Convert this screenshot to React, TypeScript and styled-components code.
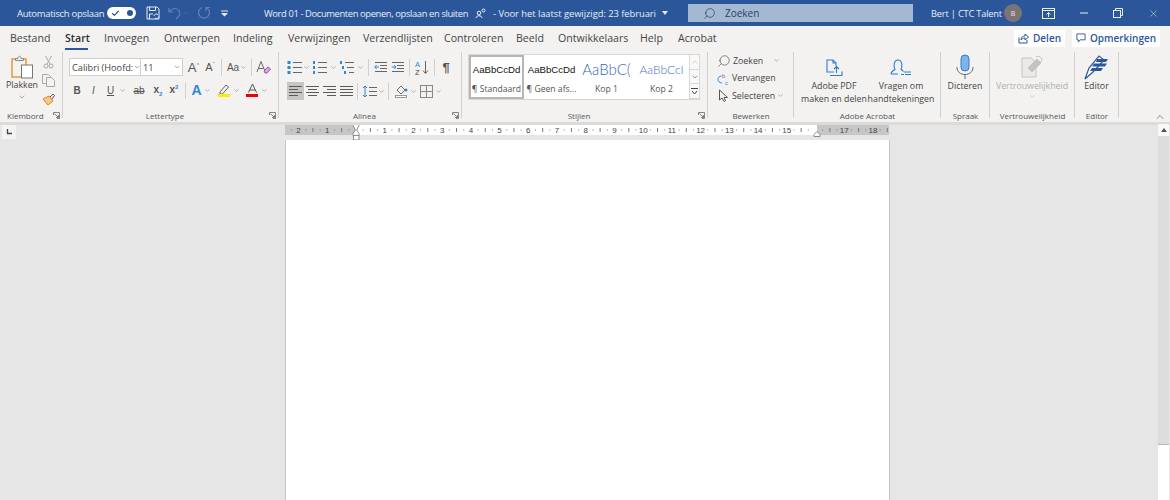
import React from 'react';
import styled, { createGlobalStyle } from 'styled-components';
import { ChevronDown, ChevronUp, Search, X, Check } from 'lucide-react';

const Global = createGlobalStyle`
  html, body { margin: 0; padding: 0; height: 500px; overflow: hidden; }
  body { font-family: "Open Sans", "Liberation Sans", sans-serif; background: #e6e6e6; }
  #root { height: 500px; }
`;

const Page = styled.div`
  width: 1170px;
  height: 500px;
  display: flex;
  flex-direction: column;
  overflow: hidden;
`;

/* title bar */
const TitleBar = styled.div`
  height: 26px;
  background: #2b579a;
  color: #e8edf5;
  display: flex;
  align-items: center;
  font-size: 9.4px;
  flex-shrink: 0;
`;
const AutoSave = styled.span`
  margin-left: 17px;
  width: 90px;
  white-space: nowrap;
  letter-spacing: -0.3px;
  font-size: 9.5px;
`;
const Toggle = styled.div`
  width: 29px;
  height: 12px;
  border-radius: 6px;
  background: #fff;
  display: flex;
  align-items: center;
  justify-content: space-between;
  padding: 0 3px 0 4px;
  box-sizing: border-box;
  color: #2b579a;
`;
const Dot = styled.i`
  width: 6px;
  height: 6px;
  border-radius: 50%;
  background: #2b579a;
`;
const QuickIcons = styled.div`
  display: flex;
  align-items: center;
  margin-left: 10px;
  width: 118px;
`;
const DocTitle = styled.div`
  width: 424px;
  display: flex;
  align-items: center;
  white-space: nowrap;
`;
const DocName = styled.span`
  letter-spacing: -0.38px;
`;
const DocDate = styled.span`
  margin-left: 7px;
  letter-spacing: -0.05px;
`;
const SearchBox = styled.div`
  width: 225px;
  height: 18px;
  background: #a5b8d2;
  color: #26426e;
  display: flex;
  align-items: center;
  padding-left: 15px;
  box-sizing: border-box;
  gap: 9px;
  font-size: 10px;
`;
const UserName = styled.span`
  margin-left: 18px;
  width: 73px;
  white-space: nowrap;
  font-size: 9.2px;
  letter-spacing: -0.15px;
`;
const Avatar = styled.div`
  width: 18px;
  height: 18px;
  border-radius: 50%;
  background: #7a7574;
  color: #e8e8e8;
  font-size: 7px;
  display: flex;
  align-items: center;
  justify-content: center;
`;
const WinButtons = styled.div`
  display: flex;
  align-items: center;
  margin-left: 20px;
  gap: 25px;
`;

/* tabs */
const TabRow = styled.div`
  height: 24px;
  background: #f3f2f1;
  display: flex;
  align-items: center;
  padding-left: 10px;
  font-size: 10.6px;
  color: #444;
  flex-shrink: 0;
`;
const Tab = styled.div<{ $w: number; $active?: boolean }>`
  width: ${(p) => p.$w}px;
  white-space: nowrap;
  position: relative;
  font-weight: ${(p) => (p.$active ? 600 : 400)};
  color: ${(p) => (p.$active ? '#2f2f2f' : '#444')};
  ${(p) =>
    p.$active &&
    `&::after { content: ''; position: absolute; left: 0; bottom: -5px; width: 23px; height: 2px; background: #2b579a; }`}
`;
const TabRight = styled.div`
  margin-left: auto;
  display: flex;
  gap: 7px;
  padding-right: 10px;
`;
const ShareBtn = styled.div<{ $w: number }>`
  width: ${(p) => p.$w}px;
  height: 17px;
  background: #fff;
  color: #2b579a;
  font-size: 10px;
  font-weight: 600;
  display: flex;
  align-items: center;
  justify-content: center;
  gap: 4px;
  white-space: nowrap;
`;

/* ribbon */
const Ribbon = styled.div`
  height: 72px;
  background: #f3f2f1;
  display: flex;
  flex-shrink: 0;
  border-bottom: 3px solid #dcdbda;
  position: relative;
`;
const Group = styled.div<{ $w: number }>`
  width: ${(p) => p.$w}px;
  height: 69px;
  margin-top: 2px;
  box-sizing: border-box;
  display: flex;
  flex-direction: column;
  position: relative;
  flex-shrink: 0;
  &::after {
    content: '';
    position: absolute;
    right: 0;
    top: 0;
    height: 66px;
    width: 1px;
    background: #d2d0ce;
  }
`;
const GroupBody = styled.div`
  flex: 1;
  display: flex;
  min-height: 0;
`;
const GroupLabel = styled.div<{ $launch?: boolean }>`
  height: 11px;
  font-size: 8px;
  color: #555;
  text-align: center;
  line-height: 11px;
  white-space: nowrap;
  padding-right: ${(p) => (p.$launch ? 12 : 0)}px;
`;
const Launcher = styled.svg`
  position: absolute;
  right: 3px;
  bottom: 2px;
`;
const Column = styled.div<{ $gap?: number; $pad?: string }>`
  display: flex;
  flex-direction: column;
  gap: ${(p) => p.$gap ?? 0}px;
  padding: ${(p) => p.$pad ?? 0};
`;
const Row = styled.div<{ $gap?: number; $h?: number }>`
  display: flex;
  align-items: center;
  gap: ${(p) => p.$gap ?? 0}px;
  ${(p) => (p.$h ? `height: ${p.$h}px;` : '')}
`;
const BigButton = styled.div<{ $w: number; $muted?: boolean; $ml?: number }>`
  width: ${(p) => p.$w}px;
  margin-left: ${(p) => p.$ml ?? 0}px;
  display: flex;
  flex-direction: column;
  align-items: center;
  font-size: 8.8px;
  line-height: 12.5px;
  color: ${(p) => (p.$muted ? '#b0afae' : '#444')};
  text-align: center;
  white-space: nowrap;
  flex-shrink: 0;
`;
const IconSlot = styled.div<{ $h: number }>`
  height: ${(p) => p.$h}px;
  display: flex;
  align-items: center;
  justify-content: center;
`;
const Select = styled.div<{ $w: number }>`
  width: ${(p) => p.$w}px;
  height: 18px;
  background: #fff;
  border: 1px solid #d2d0ce;
  box-sizing: border-box;
  font-size: 9.2px;
  color: #444;
  display: flex;
  align-items: center;
  justify-content: space-between;
  padding: 0 1px 0 2px;
  white-space: nowrap;
  margin-left: -1px;
`;
const VLine = styled.i<{ $h?: number; $m?: number }>`
  width: 1px;
  height: ${(p) => p.$h ?? 17}px;
  background: #d2d0ce;
  margin: 0 ${(p) => p.$m ?? 4}px;
  flex-shrink: 0;
`;
const Glyph = styled.span<{ $w?: number; $size?: number; $weight?: number; $italic?: boolean; $color?: string; $ml?: number }>`
  width: ${(p) => p.$w ?? 16}px;
  margin-left: ${(p) => p.$ml ?? 0}px;
  text-align: center;
  font-family: "Liberation Sans", sans-serif;
  font-size: ${(p) => p.$size ?? 10}px;
  font-weight: ${(p) => p.$weight ?? 400};
  font-style: ${(p) => (p.$italic ? 'italic' : 'normal')};
  color: ${(p) => p.$color ?? '#555'};
  flex-shrink: 0;
  white-space: nowrap;
`;
const Pressed = styled.div`
  width: 17px;
  height: 18px;
  background: #c8c6c4;
  display: flex;
  align-items: center;
  justify-content: center;
`;
const Plain = styled.div<{ $w?: number; $ml?: number }>`
  width: ${(p) => p.$w ?? 17}px;
  margin-left: ${(p) => p.$ml ?? 0}px;
  height: 18px;
  display: flex;
  align-items: center;
  justify-content: center;
  flex-shrink: 0;
`;

/* styles gallery */
const Gallery = styled.div`
  margin: 2px 0 0 6px;
  width: 232px;
  height: 46px;
  background: #fff;
  border: 1px solid #d8d7d6;
  box-sizing: border-box;
  display: flex;
`;
const StyleCard = styled.div<{ $w: number; $on?: boolean }>`
  width: ${(p) => p.$w}px;
  height: 44px;
  box-sizing: border-box;
  border: ${(p) => (p.$on ? '2.5px solid #b7b6b5' : '2.5px solid transparent')};
  display: flex;
  flex-direction: column;
  align-items: center;
  flex-shrink: 0;
`;
const StylePreview = styled.div<{ $size: number; $color?: string; $font?: string; $weight?: number }>`
  height: 26px;
  line-height: 25px;
  font-family: ${(p) => p.$font ?? '"Liberation Sans"'}, sans-serif;
  font-size: ${(p) => p.$size}px;
  font-weight: ${(p) => p.$weight ?? 400};
  color: ${(p) => p.$color ?? '#111'};
  white-space: nowrap;
  text-align: center;
`;
const StyleName = styled.div`
  font-size: 8.6px;
  color: #555;
  white-space: nowrap;
  line-height: 12px;
`;
const GalleryArrows = styled.div`
  margin-left: auto;
  width: 12px;
  display: flex;
  flex-direction: column;
  border-left: 1px solid #d8d7d6;
`;
const GalleryArrow = styled.div`
  flex: 1;
  display: flex;
  align-items: center;
  justify-content: center;
  border-bottom: 1px solid #d8d7d6;
  background: #f8f8f8;
`;
const EditRow = styled.div`
  height: 17.5px;
  display: flex;
  align-items: center;
  font-size: 8.8px;
  color: #444;
  gap: 2px;
  white-space: nowrap;
`;
const EditLabel = styled.span<{ $w?: number }>`
  ${(p) => (p.$w ? `width: ${p.$w}px;` : '')}
`;

/* ruler + canvas */
const RulerRow = styled.div`
  height: 15px;
  background: #e6e6e6;
  display: flex;
  align-items: flex-start;
  flex-shrink: 0;
`;
const TabStop = styled.div`
  margin-left: 2px;
  width: 14px;
  height: 14px;
  background: #f3f3f3;
  display: flex;
  align-items: center;
  justify-content: center;
`;
const RulerWrap = styled.div`
  margin-left: 269px;
  width: 604px;
  height: 15px;
`;
const Work = styled.div`
  flex: 1;
  background: #e6e6e6;
  display: flex;
  min-height: 0;
`;
const Sheet = styled.div`
  margin-left: 285px;
  width: 605px;
  background: #fff;
  box-sizing: border-box;
  border-left: 1px solid #c8c6c4;
  border-right: 1px solid #c8c6c4;
`;
const Scrollbar = styled.div`
  position: absolute;
  right: 1px;
  top: 124px;
  width: 11px;
  height: 376px;
  background: #dcdcdc;
  display: flex;
  flex-direction: column;
`;
const ScrollUp = styled.div`
  height: 12px;
  background: #f8f8f8;
  display: flex;
  align-items: center;
  justify-content: center;
`;
const ScrollThumb = styled.div`
  margin-top: auto;
  height: 56px;
  background: #fff;
  border-top: 1px solid #b8b8b8;
  box-sizing: border-box;
`;

const Chev = ({ s = 9, c = '#666' }: { s?: number; c?: string }) => (
  <ChevronDown size={s} color={c} strokeWidth={1.6} style={{ flexShrink: 0 }} />
);

const Corner = () => (
  <Launcher width="7" height="7" viewBox="0 0 7 7" fill="none" stroke="#777" strokeWidth="0.9">
    <path d="M.5 3V.5h6v6H4M1.500 1.500l4 4M5.500 3v2.500H3" />
  </Launcher>
);

const Lines = ({ align = 'left' }: { align?: 'left' | 'center' | 'right' | 'justify' }) => {
  const sets = align === 'justify' ? [13, 13, 13, 13] : [13, 9, 13, 9];
  return (
    <svg width="14" height="12" viewBox="0 0 14 12" stroke="#5a5a5a">
      {sets.map((w, i) => {
        const x = align === 'center' ? (13 - w) / 2 : align === 'right' ? 13 - w : 0;
        return <path key={i} d={`M${x} ${1.5 + i * 3}h${w}`} />;
      })}
    </svg>
  );
};

const BulletList = ({ kind }: { kind: 'dot' | 'num' | 'multi' }) => (
  <svg width="16" height="13" viewBox="0 0 16 13">
    {[1.5, 6.5, 11.5].map((y, i) => {
      const ind = kind === 'multi' ? i * 2 : 0;
      return (
        <g key={y}>
          {kind === 'dot' ? (
            <rect x={0.5} y={y - 1.5} width="3" height="3" fill="#2b88d8" />
          ) : (
            <rect x={1 + ind} y={y - 1.5} width="2" height="3" fill="#2b88d8" />
          )}
          <path d={`M${6 + ind} ${y}H15`} stroke="#666" />
        </g>
      );
    })}
  </svg>
);

const Indent = ({ out }: { out?: boolean }) => (
  <svg width="14" height="12" viewBox="0 0 14 12" fill="none">
    <path d="M1 1.500h12M6 4.500h7M6 7.500h7M1 10.500h12" stroke="#666" />
    <path d={out ? 'M5 6H0.800M2.600 4 .8 6l1.800 2' : 'M.8 6H5M3.200 4 5 6 3.200 8'} stroke="#2b88d8" />
  </svg>
);

const RulerSvg = () => {
  const cm = 28.72;
  const zero = 71;
  const ticks: React.ReactNode[] = [];
  for (let i = -3; i <= 19; i++) {
    const base = zero + i * cm;
    if (i !== 0 && i !== 16 && i > -3 && i < 19) {
      ticks.push(
        <text key={`n${i}`} x={base} y={8} fontSize="8" textAnchor="middle" fill="#444" fontFamily="Liberation Sans, sans-serif">
          {Math.abs(i)}
        </text>,
      );
    }
    [0.25, 0.75].forEach((f) => {
      ticks.push(<path key={`s${i}${f}`} d={`M${base + f * cm} 4.500v1`} stroke="#777" />);
    });
    ticks.push(<path key={`m${i}`} d={`M${base + 0.5 * cm} 3v4`} stroke="#777" />);
  }
  return (
    <svg width="604" height="15" viewBox="0 0 604 15" style={{ display: 'block', overflow: 'visible' }}>
      <defs>
        <clipPath id="rl">
          <rect x="0" y="0" width="604" height="15" />
        </clipPath>
      </defs>
      <rect x="0" y="0" width="604" height="10" fill="#fff" />
      <rect x="0" y="0" width="71" height="10" fill="#c6c6c6" />
      <rect x="532" y="0" width="72" height="10" fill="#c6c6c6" />
      <g clipPath="url(#rl)">{ticks}</g>
      <path d="M68 -1.500h6v2L71.600 5 74 8.500v2h-6v-2L70.400 5 68 .5z" fill="#fff" stroke="#8a8a8a" />
      <rect x="68.500" y="10.500" width="5.500" height="4.500" fill="#fff" stroke="#8a8a8a" />
      <path d="M532 6.500l3 3v2h-6v-2z" fill="#fff" stroke="#8a8a8a" />
    </svg>
  );
};

export default function App() {
  return (
    <Page>
      <Global />
      <TitleBar>
        <AutoSave>Automatisch opslaan</AutoSave>
        <Toggle>
          <Check size={9} strokeWidth={3} />
          <Dot />
        </Toggle>
        <QuickIcons>
          <svg width="14" height="14" viewBox="0 0 14 14" fill="none" stroke="#e8edf5">
            <path d="M1 1h10l2 2v10H1z" />
            <path d="M3.500 1v3.500h6V1M3.500 13V8H7" />
            <path d="M8 10a2.500 2.500 0 0 1 4-1.500M13 10.500a2.500 2.500 0 0 1-4 1.500" />
          </svg>
          <svg width="14" height="13" viewBox="0 0 14 13" fill="none" stroke="#5f80b4" strokeWidth="1.200" style={{ marginLeft: 8 }}>
            <path d="M1 1v4h4M1.300 5C3 2.500 5 1.500 7 1.500a5 5 0 0 1 4.500 7L8 12" />
          </svg>
          <span style={{ marginLeft: 1, display: 'flex' }}>
            <Chev s={6} c="#5f80b4" />
          </span>
          <svg width="14" height="14" viewBox="0 0 14 14" fill="none" stroke="#5f80b4" strokeWidth="1.200" style={{ marginLeft: 8 }}>
            <path d="M5 1.500a5.500 5.500 0 1 0 4 0M9 1v4M9 1.500h4" />
          </svg>
          <svg width="7" height="7" viewBox="0 0 7 7" fill="#e8edf5" style={{ marginLeft: 10 }}>
            <path d="M0 .5h7v1H0zM0 3h7L3.500 6.500z" />
          </svg>
        </QuickIcons>
        <DocTitle>
          <DocName>Word 01 - Documenten openen, opslaan en sluiten</DocName>
          <svg width="11" height="11" viewBox="0 0 11 11" fill="none" stroke="#e8edf5" style={{ marginLeft: 7 }}>
            <circle cx="4" cy="5" r="1.800" />
            <path d="M1 10c0-3 6-3 6 0" />
            <circle cx="8.500" cy="2.500" r="1.500" />
          </svg>
          <DocDate>- Voor het laatst gewijzigd: 23 februari</DocDate>
          <svg width="6" height="4" viewBox="0 0 6 4" fill="#e8edf5" style={{ marginLeft: 6 }}>
            <path d="M0 0h6L3 4z" />
          </svg>
        </DocTitle>
        <SearchBox>
          <Search size={13} strokeWidth={1.3} style={{ transform: 'scaleX(-1)' }} />
          Zoeken
        </SearchBox>
        <UserName>Bert | CTC Talent</UserName>
        <Avatar>B</Avatar>
        <WinButtons>
          <svg width="13" height="11" viewBox="0 0 13 11" fill="none" stroke="#e8edf5">
            <rect x=".5" y=".5" width="12" height="10" />
            <path d="M.5 2.500h12" />
            <path d="M6.500 9V4.500M4.500 6.500l2-2 2 2" />
          </svg>
          <svg width="8" height="2" viewBox="0 0 8 2" stroke="#e8edf5">
            <path d="M0 1h8" />
          </svg>
          <svg width="10" height="10" viewBox="0 0 10 10" fill="none" stroke="#e8edf5">
            <rect x=".5" y="2.500" width="7" height="7" />
            <path d="M2.500 2.500v-2h7v7h-2" />
          </svg>
          <X size={11} strokeWidth={1.1} />
        </WinButtons>
      </TitleBar>

      <TabRow>
        <Tab $w={55}>Bestand</Tab>
        <Tab $w={39} $active>Start</Tab>
        <Tab $w={60}>Invoegen</Tab>
        <Tab $w={69}>Ontwerpen</Tab>
        <Tab $w={55}>Indeling</Tab>
        <Tab $w={75}>Verwijzingen</Tab>
        <Tab $w={81}>Verzendlijsten</Tab>
        <Tab $w={72}>Controleren</Tab>
        <Tab $w={42}>Beeld</Tab>
        <Tab $w={82}>Ontwikkelaars</Tab>
        <Tab $w={38}>Help</Tab>
        <Tab $w={50}>Acrobat</Tab>
        <TabRight>
          <ShareBtn $w={51}>
            <svg width="11" height="11" viewBox="0 0 11 11" fill="none" stroke="#2b579a">
              <path d="M1 4.500V10h8V7M3 7c0-3 2-4 4-4V1l3.500 3L7 7V5C5 5 4 6 3 7z" />
            </svg>
            Delen
          </ShareBtn>
          <ShareBtn $w={88}>
            <svg width="10" height="10" viewBox="0 0 11 11" fill="none" stroke="#2b579a">
              <path d="M1 1h9v6.500H4.500L2.500 10V7.500H1z" />
            </svg>
            Opmerkingen
          </ShareBtn>
        </TabRight>
      </TabRow>

      <Ribbon>
        <Group $w={63}>
          <GroupBody>
            <BigButton $w={40} $ml={2}>
              <IconSlot $h={29}>
                <svg width="24" height="24" viewBox="0 0 24 24" fill="none">
                  <path d="M2 4h14v18H2z" stroke="#e69a3e" strokeWidth="1.500" />
                  <path d="M5.500 5.500V3.500h2.500c0-3 3-3 3 0h2.500v2z" fill="#f3f2f1" stroke="#8a8886" />
                  <rect x="11.500" y="10" width="11" height="13" fill="#fff" stroke="#777" />
                </svg>
              </IconSlot>
              <span style={{ marginTop: -2 }}>Plakken</span>
              <span style={{ marginTop: 1, display: 'flex' }}>
                <Chev s={8} />
              </span>
            </BigButton>
            <Column $gap={1} $pad="1px 0 0 0">
              <IconSlot $h={17}>
                <svg width="11" height="14" viewBox="0 0 11 14" fill="none" stroke="#a8a8a8">
                  <path d="M2.500 1 7 9M8.500 1 4 9" />
                  <circle cx="3" cy="11" r="2" />
                  <circle cx="8" cy="11" r="2" />
                </svg>
              </IconSlot>
              <IconSlot $h={18}>
                <svg width="13" height="13" viewBox="0 0 13 13" fill="none" stroke="#a8a8a8">
                  <path d="M.5.500h6l2 2v7h-8z" fill="#f3f2f1" />
                  <path d="M4.500 3.500h5l3 3v6h-8z" fill="#f3f2f1" />
                </svg>
              </IconSlot>
              <IconSlot $h={18}>
                <svg width="13" height="13" viewBox="0 0 13 13" fill="none">
                  <path d="M1 6l6-3 4 5-5 4z" fill="#f7c78d" stroke="#e8801a" />
                  <path d="M8 4l3-3 1.500 1.500L10 6" stroke="#555" />
                </svg>
              </IconSlot>
            </Column>
          </GroupBody>
          <GroupLabel style={{ textAlign: 'left', paddingLeft: 7 }}>Klembord</GroupLabel>
          <Corner />
        </Group>

        <Group $w={216}>
          <GroupBody>
            <Column $gap={5} $pad="6px 0 0 7px">
              <Row>
                <Select $w={72}>
                  <span>Calibri (Hoofd:</span>
                  <Chev s={8} />
                </Select>
                <Select $w={43}>
                  <span>11</span>
                  <Chev s={8} />
                </Select>
                <Glyph $w={15} $size={13} $ml={3}>A<sup style={{ fontSize: 6, color: '#2b88d8' }}>^</sup></Glyph>
                <Glyph $w={14} $size={11} $ml={2}>A<sup style={{ fontSize: 6, color: '#2b88d8' }}>ˇ</sup></Glyph>
                <VLine />
                <Glyph $w={14} $size={10}>Aa</Glyph>
                <Chev s={7} />
                <VLine />
                <svg width="15" height="15" viewBox="0 0 15 15" fill="none">
                  <path d="M1 12 5 1.500 8.500 10M2.500 8.500h5" stroke="#666" />
                  <path d="M8 11l4-4 2.500 2-3.500 4H9z" fill="#d9a7e0" stroke="#a24fb0" />
                </svg>
              </Row>
              <Row $h={18}>
                <Glyph $w={16} $weight={700} $ml={-1}>B</Glyph>
                <Glyph $w={17} $italic>I</Glyph>
                <Glyph $w={17} style={{ textDecoration: 'underline' }}>U</Glyph>
                <Chev s={7} />
                <Glyph $w={22} $ml={2} style={{ textDecoration: 'line-through' }}>ab</Glyph>
                <Glyph $w={16} $weight={700}>x<sub style={{ fontSize: 6, color: '#2b88d8' }}>2</sub></Glyph>
                <Glyph $w={16} $weight={700}>x<sup style={{ fontSize: 6, color: '#2b88d8' }}>2</sup></Glyph>
                <VLine $m={3} />
                <Glyph $w={15} $size={14} $weight={700} $color="#2b88d8">A</Glyph>
                <Chev s={7} />
                <Plain $ml={5}>
                  <svg width="13" height="14" viewBox="0 0 13 14" fill="none">
                    <path d="M2 9l6-7 2.500 2-6 7H2z" stroke="#666" />
                    <rect x="0" y="11" width="12" height="3" fill="#ffea00" />
                  </svg>
                </Plain>
                <Chev s={7} />
                <Plain $ml={4}>
                  <svg width="13" height="14" viewBox="0 0 13 14" fill="none">
                    <path d="M2.500 9.500 6.500 1l4 8.500M4 7h5" stroke="#555" />
                    <rect x="0" y="11" width="12" height="3" fill="#f00000" />
                  </svg>
                </Plain>
                <Chev s={7} />
              </Row>
            </Column>
          </GroupBody>
          <GroupLabel $launch>Lettertype</GroupLabel>
          <Corner />
        </Group>

        <Group $w={183}>
          <GroupBody>
            <Column $gap={6} $pad="6px 0 0 8px">
              <Row $h={18}>
                <BulletList kind="dot" />
                <Chev s={7} />
                <Plain $w={20}><BulletList kind="num" /></Plain>
                <Chev s={7} />
                <Plain $w={20}><BulletList kind="multi" /></Plain>
                <Chev s={7} />
                <VLine $m={4} />
                <Plain $w={16}><Indent out /></Plain>
                <Plain><Indent /></Plain>
                <VLine $m={3} />
                <Plain $w={18}>
                  <svg width="14" height="15" viewBox="0 0 14 15" fill="none">
                    <text x="0" y="7" fontSize="7.500" fill="#2b88d8" fontFamily="Liberation Sans, sans-serif">A</text>
                    <text x="0" y="14.500" fontSize="7.500" fill="#444" fontFamily="Liberation Sans, sans-serif">Z</text>
                    <path d="M10.500 1v12M8 10.500l2.500 3 2.500-3" stroke="#666" />
                  </svg>
                </Plain>
                <VLine $m={3} />
                <Glyph $w={16} $size={13} $weight={700} $color="#555">¶</Glyph>
              </Row>
              <Row $h={18}>
                <Pressed><Lines /></Pressed>
                <Plain><Lines align="center" /></Plain>
                <Plain><Lines align="right" /></Plain>
                <Plain><Lines align="justify" /></Plain>
                <VLine $m={2} />
                <Plain $w={18}>
                  <svg width="15" height="13" viewBox="0 0 15 13" fill="none">
                    <path d="M3 1v11M1 3l2-2 2 2M1 10l2 2 2-2" stroke="#2b88d8" />
                    <path d="M7 2.500h8M7 6.500h8M7 10.500h8" stroke="#666" />
                  </svg>
                </Plain>
                <Chev s={7} />
                <VLine $m={3} />
                <Plain $ml={1}>
                  <svg width="14" height="14" viewBox="0 0 14 14" fill="none">
                    <path d="M2 6l4-4 4 4-4 4z" stroke="#666" />
                    <circle cx="11" cy="6" r="1.500" fill="#2b88d8" />
                    <rect x=".5" y="11.500" width="11" height="2" stroke="#999" fill="#fff" />
                  </svg>
                </Plain>
                <Chev s={7} />
                <Plain $ml={1}>
                  <svg width="13" height="13" viewBox="0 0 13 13" fill="none" stroke="#888">
                    <rect x=".5" y=".5" width="12" height="12" />
                    <path d="M6.500 1v11M1 6.500h11" />
                  </svg>
                </Plain>
                <Chev s={7} />
              </Row>
            </Column>
          </GroupBody>
          <GroupLabel $launch>Alinea</GroupLabel>
          <Corner />
        </Group>

        <Group $w={246}>
          <GroupBody>
            <Gallery>
              <StyleCard $w={55} $on>
                <StylePreview $size={9.6}>AaBbCcDd</StylePreview>
                <StyleName>¶ Standaard</StyleName>
              </StyleCard>
              <StyleCard $w={55}>
                <StylePreview $size={9.6}>AaBbCcDd</StylePreview>
                <StyleName>¶ Geen afs...</StyleName>
              </StyleCard>
              <StyleCard $w={55}>
                <StylePreview $size={15} $color="#3767bd" $font="Lato" $weight={300}>AaBbC(</StylePreview>
                <StyleName>Kop 1</StyleName>
              </StyleCard>
              <StyleCard $w={55}>
                <StylePreview $size={12} $color="#3f70c8" $font="Lato" $weight={300}>AaBbCcI</StylePreview>
                <StyleName>Kop 2</StyleName>
              </StyleCard>
              <GalleryArrows>
                <GalleryArrow><ChevronUp size={8} color="#bbb" /></GalleryArrow>
                <GalleryArrow><Chev s={8} c="#444" /></GalleryArrow>
                <GalleryArrow>
                  <svg width="7" height="7" viewBox="0 0 7 7" fill="none" stroke="#444">
                    <path d="M0 .5h7M1 3l2.500 3L6 3" />
                  </svg>
                </GalleryArrow>
              </GalleryArrows>
            </Gallery>
          </GroupBody>
          <GroupLabel $launch>Stijlen</GroupLabel>
          <Corner />
        </Group>

        <Group $w={86}>
          <GroupBody>
            <Column $pad="0 0 0 9px">
              <EditRow>
                <Search size={14} color="#555" strokeWidth={1.2} style={{ transform: 'scaleX(-1)' }} />
                <EditLabel $w={38}>Zoeken</EditLabel>
                <Chev s={7} />
              </EditRow>
              <EditRow>
                <svg width="13" height="13" viewBox="0 0 13 13" fill="none">
                  <text x="5" y="6" fontSize="6" fill="#a24fb0" fontFamily="Liberation Sans, sans-serif">b</text>
                  <text x="8" y="12.500" fontSize="6" fill="#2b88d8" fontFamily="Liberation Sans, sans-serif">c</text>
                  <path d="M4.500 4C2 4 1 6 1 7.500S2.500 11 5 11" stroke="#2b88d8" />
                </svg>
                <EditLabel>Vervangen</EditLabel>
              </EditRow>
              <EditRow>
                <svg width="13" height="13" viewBox="0 0 13 13" fill="none" stroke="#555">
                  <path d="M2.500 1v10l2.500-2 2 3.500 1.500-1L7 8.500h3.500z" />
                </svg>
                <EditLabel>Selecteren</EditLabel>
                <Chev s={7} />
              </EditRow>
            </Column>
          </GroupBody>
          <GroupLabel>Bewerken</GroupLabel>
        </Group>

        <Group $w={147}>
          <GroupBody>
            <BigButton $w={80}>
              <IconSlot $h={27}>
                <svg width="17" height="18" viewBox="0 0 17 18" fill="none" stroke="#2b7cd3" strokeWidth="1.100" style={{ marginTop: 4 }}>
                  <path d="M8 13H1V1h6l3 3v3" />
                  <path d="M7 1v3h3" />
                  <path d="M4 16.500h12v-4M10.500 14V7.500M8 10l2.500-2.500L13 10" />
                </svg>
              </IconSlot>
              <span style={{ marginTop: 1 }}>Adobe PDF</span>
              <span>maken en delen</span>
            </BigButton>
            <BigButton $w={54}>
              <IconSlot $h={27}>
                <svg width="22" height="18" viewBox="0 0 22 18" fill="none" stroke="#2b7cd3" strokeWidth="1.100" style={{ marginTop: 4 }}>
                  <path d="M1 15c0-2 1-3 4-4.500C3.500 8 3.500 1 8 1s4.500 7 3 9.500c1 .5 2 1 2.500 2M1 15h7" />
                  <path d="M11 15.500h3M15 15.500h6M14 13h7" />
                </svg>
              </IconSlot>
              <span style={{ marginTop: 1 }}>Vragen om</span>
              <span>handtekeningen</span>
            </BigButton>
          </GroupBody>
          <GroupLabel>Adobe Acrobat</GroupLabel>
        </Group>

        <Group $w={49}>
          <GroupBody>
            <BigButton $w={48}>
              <IconSlot $h={27}>
                <svg width="18" height="26" viewBox="0 0 18 26" fill="none" style={{ marginTop: 3 }}>
                  <rect x="5" y="1" width="8" height="16" rx="4" fill="#7fb4e8" stroke="#2b7cd3" />
                  <path d="M1 13c0 5 3.500 7.500 8 7.500S17 18 17 13M9 20.500V25" stroke="#666" />
                </svg>
              </IconSlot>
              <span style={{ marginTop: 1 }}>Dicteren</span>
            </BigButton>
          </GroupBody>
          <GroupLabel>Spraak</GroupLabel>
        </Group>

        <Group $w={85}>
          <GroupBody>
            <BigButton $w={84} $muted>
              <IconSlot $h={27}>
                <svg width="22" height="24" viewBox="0 0 22 24" fill="none" stroke="#c4c3c2" style={{ marginTop: 2 }}>
                  <path d="M1 3h9l5 4v15H1z" fill="#ebeae9" />
                  <path d="M7 13l9-9 4 4-9 9z" fill="#c4c3c2" />
                  <path d="M15 2l3-1 3 3-1 3" />
                </svg>
              </IconSlot>
              <span style={{ marginTop: 1 }}>Vertrouwelijkheid</span>
              <Chev s={7} c="#b0afae" />
            </BigButton>
          </GroupBody>
          <GroupLabel>Vertrouwelijkheid</GroupLabel>
        </Group>

        <Group $w={44}>
          <GroupBody>
            <BigButton $w={43}>
              <IconSlot $h={27}>
                <svg width="25" height="26" viewBox="0 0 25 26" fill="none" style={{ marginTop: 3 }}>
                  <path d="M1 25l4-11L15 2l5 4-11 12z" fill="#fff" stroke="#2b579a" strokeWidth="1.200" />
                  <path d="M13 5h11l-2 3H12zM10 9.500h13l-2 3H8zM8 14h11l-2 3H6z" fill="#2b579a" />
                </svg>
              </IconSlot>
              <span style={{ marginTop: 1 }}>Editor</span>
            </BigButton>
          </GroupBody>
          <GroupLabel>Editor</GroupLabel>
        </Group>

        <ChevronUp
          size={12}
          color="#555"
          strokeWidth={1.3}
          style={{ position: 'absolute', right: 4, bottom: -1 }}
        />
      </Ribbon>

      <RulerRow>
        <TabStop>
          <svg width="6" height="6" viewBox="0 0 6 6" fill="none" stroke="#444" strokeWidth="1.300">
            <path d="M1.500 0v4.500H6" />
          </svg>
        </TabStop>
        <RulerWrap>
          <RulerSvg />
        </RulerWrap>
      </RulerRow>

      <Work>
        <Sheet />
      </Work>

      <Scrollbar>
        <ScrollUp>
          <svg width="6" height="4" viewBox="0 0 6 4" fill="#555">
            <path d="M3 0l3 4H0z" />
          </svg>
        </ScrollUp>
        <ScrollThumb />
      </Scrollbar>
    </Page>
  );
}
